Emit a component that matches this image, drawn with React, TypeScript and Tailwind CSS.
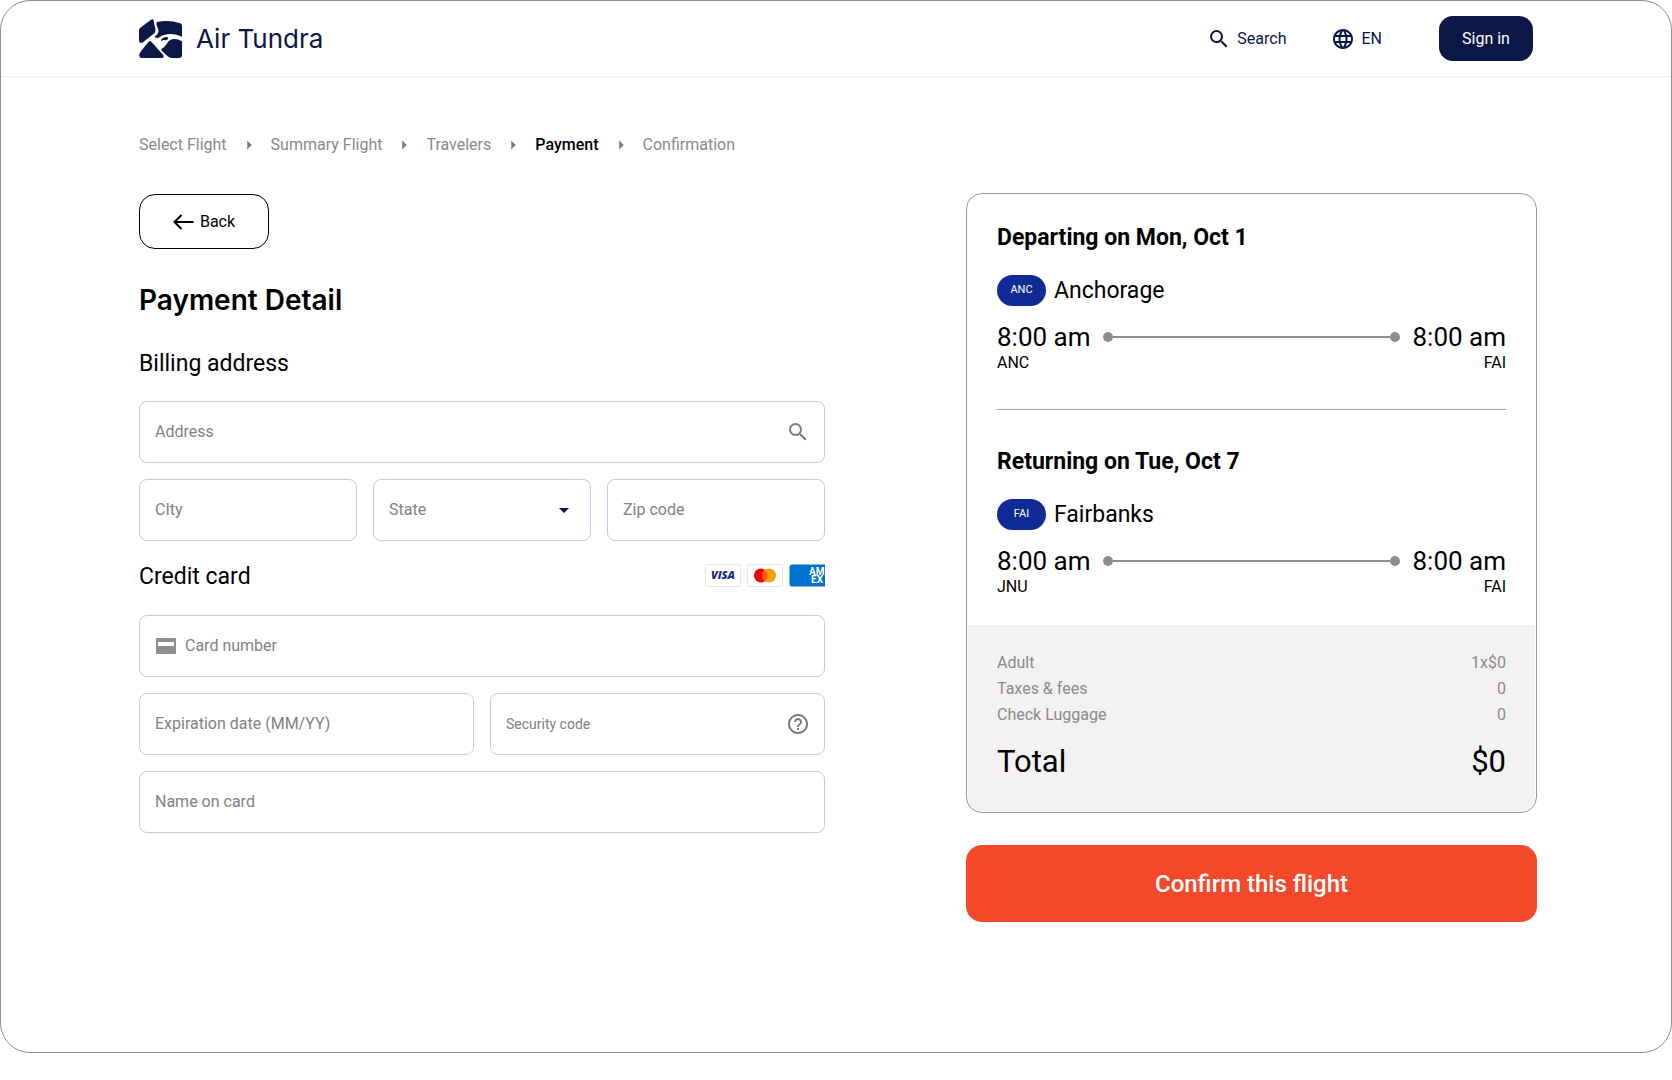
import { useState } from "react";
import type { ReactNode } from "react";
import {
  MdArrowDropDown,
  MdArrowRight,
  MdHelpOutline,
  MdLanguage,
  MdSearch,
} from "react-icons/md";

const steps = ["Select Flight", "Summary Flight", "Travelers", "Payment", "Confirmation"];

const flights = [
  { title: "Departing on Mon, Oct 1", code: "ANC", city: "Anchorage", from: "ANC", to: "FAI" },
  { title: "Returning on Tue, Oct 7", code: "FAI", city: "Fairbanks", from: "JNU", to: "FAI" },
];

const fees = [
  { label: "Adult", value: "1x$0" },
  { label: "Taxes & fees", value: "0" },
  { label: "Check Luggage", value: "0" },
];

function Logo() {
  return (
    <svg viewBox="0 0 129 117" className="w-[43px] h-[39px]" fill="#0a1747" aria-hidden="true">
      <path d="M4 26 L36 2 Q42 -1 44 5 L47 22 Q50 28 49 36 Q49 41 44 44 L14 68 Q8 73 3 71 Q0 69 0 63 V34 Q0 29 4 26Z" />
      <path d="M54 9 Q90 2 124 13 Q129 15 129 20 V53 Q108 43 86 46 Q68 48 57 58 L46 54 L55 46 Q60 41 58 32 L53 18 Q51 11 54 9Z" />
      <path d="M29 68 Q33 64 37 68 L72 107 Q76 113 71 117 H7 Q-1 117 1 107 Q2 101 7 95Z" />
      <path d="M67 90 Q76 86 83 75 Q91 60 106 60 Q118 60 129 67 V108 Q129 117 120 117 H100 Q93 117 88 113 L68 95Z" />
      <path d="M66 62 Q73 52 84 54 Q90 56 86 61 Q83 65 77 63 Q71 62 66 67Z" />
    </svg>
  );
}

function Header() {
  return (
    <header className="flex items-center justify-between h-[76px] border-b border-[#ececec] pl-[138px] pr-[138px]">
      <a href="#" className="flex items-center gap-[14px] text-[#0a1747]">
        <Logo />
        <span className="font-['Inter',sans-serif] text-[26px] leading-8">Air Tundra</span>
      </a>
      <nav className="flex items-center text-[#0a1747]">
        <a href="#" className="flex items-center gap-[6px] mr-[45px]">
          <MdSearch size={24} />
          Search
        </a>
        <a href="#" className="flex items-center gap-[6px] mr-[57px]">
          <MdLanguage size={24} />
          EN
        </a>
        <button
          type="button"
          className="w-[94px] h-[45px] rounded-[14px] bg-[#0a1747] hover:bg-[#16256b] text-white"
        >
          Sign in
        </button>
      </nav>
    </header>
  );
}

function Breadcrumb() {
  return (
    <ol className="flex items-center">
      {steps.map((step, i) => (
        <li key={step} className="flex items-center">
          {i > 0 && <MdArrowRight size={22} className="mx-[11px] text-[#7b7b7b]" />}
          <span className={step === "Payment" ? "text-black font-medium" : "text-[#8a8a8a]"}>{step}</span>
        </li>
      ))}
    </ol>
  );
}

interface FieldProps {
  label: string;
  before?: ReactNode;
  after?: ReactNode;
  small?: boolean;
}

function Field({ label, before, after, small }: FieldProps) {
  const [value, setValue] = useState("");

  return (
    <div className="flex items-center min-w-0 h-[62px] rounded-lg border border-[#c5cae9] pl-[15px] pr-[14px] text-[#7a7a7a]">
      {before}
      <input
        type="text"
        aria-label={label}
        placeholder={label}
        value={value}
        onChange={(e) => setValue(e.target.value)}
        className={`flex-1 min-w-0 outline-none text-black placeholder:text-[#828282] ${small ? "text-sm" : "text-base"}`}
      />
      {after}
    </div>
  );
}

function StateSelect() {
  return (
    <div className="relative h-[62px] rounded-lg border border-[#c5cae9] text-[#828282]">
      <select
        aria-label="State"
        defaultValue=""
        className="w-full h-full appearance-none bg-transparent pl-[15px] pr-10 outline-none"
      >
        <option value="">State</option>
        <option value="AK">Alaska</option>
        <option value="WA">Washington</option>
      </select>
      <MdArrowDropDown
        size={24}
        className="absolute right-[14px] top-[18px] text-[#0a1747] pointer-events-none"
      />
    </div>
  );
}

function CardIcon() {
  return (
    <svg viewBox="0 0 20 16" className="w-5 h-4 mr-[9px] ml-px shrink-0" fill="#8e8e8e" aria-hidden="true">
      <path
        fillRule="evenodd"
        d="M1 0H19Q20 0 20 1V15Q20 16 19 16H1Q0 16 0 15V1Q0 0 1 0ZM2 4V8H18V4Z"
      />
    </svg>
  );
}

function CardLogos() {
  return (
    <div className="flex gap-[6px] pb-1">
      <svg viewBox="0 0 36 23" className="w-9 h-[23px]" role="img" aria-label="Visa">
        <rect x="0.5" y="0.5" width="35" height="22" rx="2.5" fill="#fff" stroke="#e6e6e6" />
        <text
          x="18"
          y="15"
          textAnchor="middle"
          fontSize="11"
          fontWeight="800"
          fontStyle="italic"
          fontFamily="Open Sans, sans-serif"
          fill="#172b85"
        >
          VISA
        </text>
      </svg>
      <svg viewBox="0 0 36 23" className="w-9 h-[23px]" role="img" aria-label="Mastercard">
        <rect x="0.5" y="0.5" width="35" height="22" rx="2.5" fill="#fff" stroke="#e6e6e6" />
        <circle cx="14" cy="11.5" r="7" fill="#ed0006" />
        <circle cx="22" cy="11.5" r="7" fill="#f9a000" />
        <path d="M18 5.8A7 7 0 0 1 18 17.2A7 7 0 0 1 18 5.8Z" fill="#ff5e00" />
      </svg>
      <svg viewBox="0 0 36 23" className="w-9 h-[23px]" role="img" aria-label="American Express">
        <path d="M3 0.5H36V22.5H3Q0.5 22.5 0.5 20V3Q0.5 0.5 3 0.5Z" fill="#016fd0" />
        <g fontSize="10" fontWeight="700" fontFamily="Roboto, sans-serif" fill="#fff">
          <text x="20" y="11">AM</text>
          <text x="22" y="19">EX</text>
        </g>
      </svg>
    </div>
  );
}

function PaymentForm() {
  return (
    <form className="min-w-0 pt-px" onSubmit={(e) => e.preventDefault()}>
      <button
        type="button"
        className="flex items-center justify-center gap-[6px] w-[130px] h-[55px] rounded-2xl border border-black hover:bg-gray-50"
      >
        <svg viewBox="0 0 21 16" className="w-[21px] h-4" fill="none" stroke="#000" strokeWidth="2" aria-hidden="true">
          <path d="M20.5 8H1.5M8.5 1L1.5 8L8.5 15" />
        </svg>
        Back
      </button>

      <h1 className="mt-[31px] font-['Inter',sans-serif] text-[28px] leading-10 font-semibold">Payment Detail</h1>

      <h2 className="mt-7 text-[23px] leading-8">Billing address</h2>
      <div className="mt-[21px] grid gap-4">
        <Field label="Address" after={<MdSearch size={24} />} />
        <div className="grid grid-cols-3 gap-4">
          <Field label="CIty" />
          <StateSelect />
          <Field label="Zip code" />
        </div>
      </div>

      <div className="mt-5 flex items-center justify-between">
        <h2 className="text-[23px] leading-8">Credit card</h2>
        <CardLogos />
      </div>
      <div className="mt-[22px] grid gap-4">
        <Field label="Card number" before={<CardIcon />} />
        <div className="grid grid-cols-2 gap-4">
          <Field label="Expiration date (MM/YY)" />
          <Field label="Security code" small after={<MdHelpOutline size={24} />} />
        </div>
        <Field label="Name on card" />
      </div>
    </form>
  );
}

function Flight({ title, code, city, from, to }: (typeof flights)[number]) {
  return (
    <section>
      <h3 className="text-[23px] leading-8 font-bold">{title}</h3>
      <div className="mt-[21px] flex items-center gap-2">
        <span className="flex items-center justify-center w-[49px] h-[31px] rounded-full bg-[#112b96] text-white text-[11px]">
          {code}
        </span>
        <span className="text-[23px] leading-[31px]">{city}</span>
      </div>
      <div className="mt-[15px] flex items-center text-[26px] leading-8">
        <span>8:00 am</span>
        <span className="flex-1 flex items-center mx-3">
          <span className="size-[10px] rounded-full bg-[#8e8e8e]" />
          <span className="flex-1 h-[2px] bg-[#8e8e8e]" />
          <span className="size-[10px] rounded-full bg-[#8e8e8e]" />
        </span>
        <span>8:00 am</span>
      </div>
      <div className="flex justify-between leading-5">
        <span>{from}</span>
        <span>{to}</span>
      </div>
    </section>
  );
}

function Summary() {
  return (
    <aside className="min-w-0">
      <div className="rounded-2xl border border-[#999] p-px">
        <div className="px-[29px] pt-[27px] pb-7">
          <Flight {...flights[0]} />
          <hr className="my-9 border-[#a3a3a3]" />
          <Flight {...flights[1]} />
        </div>
        <div className="rounded-b-[14px] bg-[#f3f1f2] px-[29px] pt-[25px] pb-[29px]">
          <dl className="text-[#8a8a8a] leading-[26px]">
            {fees.map((fee) => (
              <div key={fee.label} className="flex justify-between">
                <dt>{fee.label}</dt>
                <dd>{fee.value}</dd>
              </div>
            ))}
          </dl>
          <div className="mt-[14px] flex justify-between text-[31px] leading-10">
            <span>Total</span>
            <span>$0</span>
          </div>
        </div>
      </div>
      <button
        type="button"
        className="mt-8 w-full h-[77px] rounded-2xl bg-[#f4492b] hover:bg-[#e03d20] text-white text-2xl font-medium"
      >
        Confirm this flight
      </button>
    </aside>
  );
}

export default function App() {
  return (
    <div className="min-h-screen bg-white pb-[27px] font-['Roboto',sans-serif] text-base text-black">
      <div className="min-h-[1053px] rounded-[30px] border border-[#8e8e8e]">
        <Header />
        <main className="pl-[138px] pr-[134px] pt-14 pb-[130px]">
          <Breadcrumb />
          <div className="mt-9 grid grid-cols-[686fr_571fr] gap-[141px] items-start">
            <PaymentForm />
            <Summary />
          </div>
        </main>
      </div>
    </div>
  );
}
